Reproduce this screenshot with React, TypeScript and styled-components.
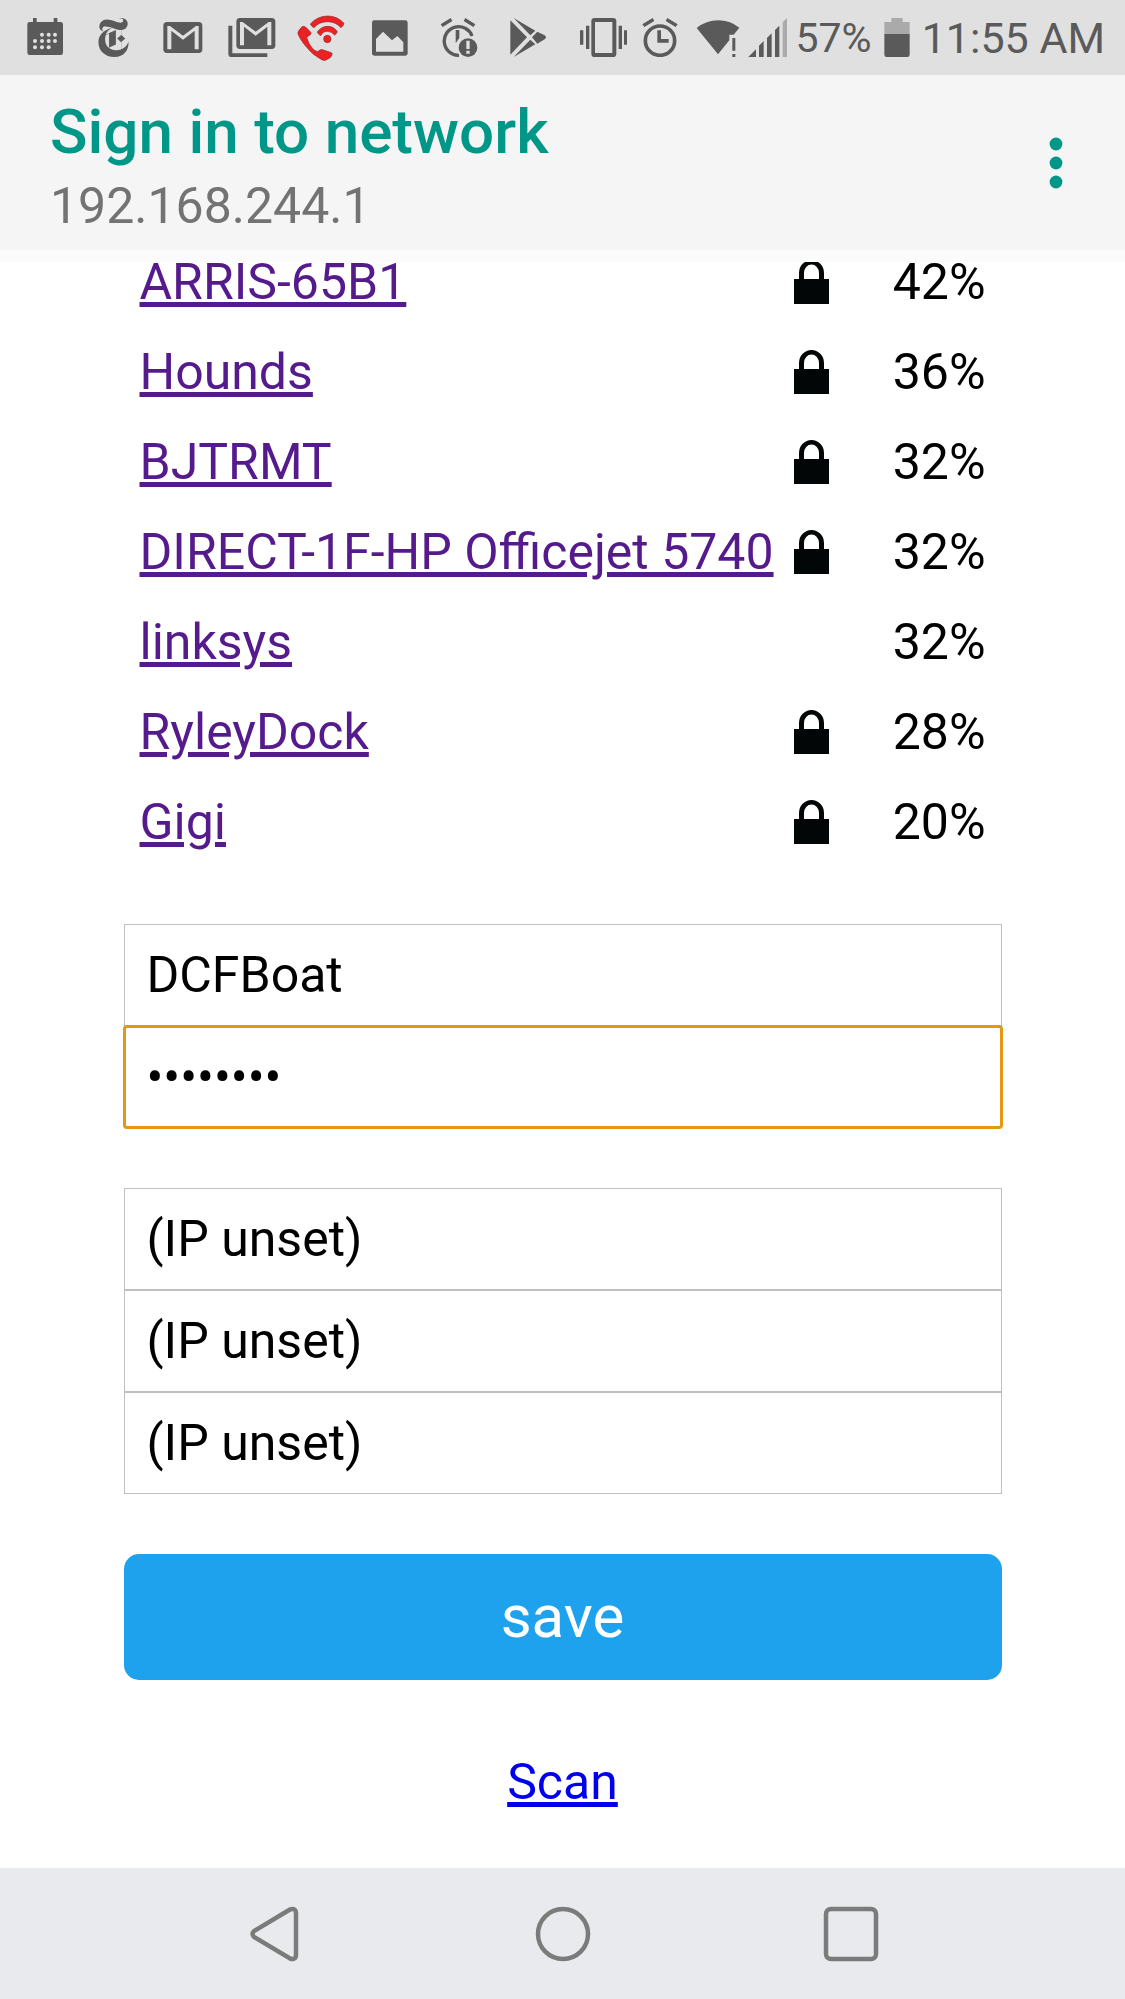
import React from "react";
import styled, { createGlobalStyle } from "styled-components";
import { SiNewyorktimes } from "react-icons/si";

const GlobalStyle = createGlobalStyle`
  *, *::before, *::after { box-sizing: border-box; }
  body {
    margin: 0;
    background: #fff;
    color: #000;
    font-family: Roboto, "Liberation Sans", sans-serif;
  }
`;

const Screen = styled.div`
  display: flex;
  flex-direction: column;
  min-height: 100vh;
`;

const StatusBar = styled.div`
  display: flex;
  justify-content: space-between;
  align-items: center;
  height: 75px;
  padding: 0 20px 0 10px;
  background: #e0e0e0;
  color: #5a5a5a;
`;

const Notifications = styled.div`
  display: flex;
  align-items: center;
`;

const Slot = styled.span`
  display: flex;
  justify-content: center;
  align-items: center;
  width: 69px;
`;

const SystemInfo = styled.div`
  display: flex;
  align-items: center;
  gap: 12px;
`;

const AlertModes = styled.div`
  display: flex;
  align-items: center;
  gap: 15px;
  padding-right: 6px;
`;

const Connectivity = styled.div`
  display: flex;
  align-items: center;
  gap: 8px;
`;

const Glyph = styled.svg`
  display: block;
  flex: none;
  fill: currentColor;
`;

const StatusText = styled.span<{ $size: number }>`
  font-size: ${(p) => p.$size}px;
  line-height: 48px;
  white-space: nowrap;
`;

const Header = styled.header`
  position: sticky;
  top: 0;
  z-index: 1;
  display: flex;
  justify-content: space-between;
  align-items: center;
  height: 187px;
  padding: 0 39px 0 50px;
  background: #f5f5f5;
  border-bottom: 12px solid #fbfbfb;
`;

const Heading = styled.div`
  padding-top: 10px;
`;

const Title = styled.h1`
  margin: 0;
  color: #009788;
  font-size: 62px;
  font-weight: 500;
  line-height: 76px;
`;

const Address = styled.div`
  color: #737373;
  font-size: 50px;
  line-height: 72px;
`;

const MenuButton = styled.button`
  display: grid;
  place-items: center;
  width: 60px;
  height: 72px;
  padding: 0;
  border: 0;
  background: none;
  color: #009788;
`;

const Page = styled.main`
  flex: 1;
`;

const Column = styled.div`
  display: flex;
  flex-direction: column;
  gap: 57px;
  width: 100%;
  max-width: 878px;
  margin: -25px auto 0;
`;

const NetworkTable = styled.table`
  margin: 0 16px;
  border-collapse: collapse;
  font-size: 50px;
  line-height: 60px;
`;

const NameCell = styled.td`
  height: 90px;
  padding: 0;
  white-space: nowrap;
`;

const LockCell = styled.td`
  width: 99px;
  padding: 0;
`;

const SignalCell = styled.td`
  width: 93px;
  padding: 0;
  text-align: right;
`;

const TextLink = styled.a<{ $visited?: boolean }>`
  color: ${(p) => (p.$visited ? "#551a8b" : "#0000ee")};
  text-decoration: underline;
`;

const Form = styled.form`
  display: flex;
  flex-direction: column;
  gap: 60px;
`;

const FieldGroup = styled.div`
  display: flex;
  flex-direction: column;
`;

const Field = styled.input<{ $active?: boolean }>`
  width: 100%;
  height: 102px;
  padding: 0 22px;
  border: 1px solid #c0c0c0;
  border-radius: ${(p) => (p.$active ? "3px" : "0")};
  outline: ${(p) => (p.$active ? "3px solid #e59712" : "none")};
  outline-offset: -2px;
  background: #fff;
  color: #000;
  font-family: inherit;
  font-size: 50px;
`;

const SaveButton = styled.button`
  height: 126px;
  padding: 0;
  border: 0;
  border-radius: 15px;
  background: #1fa2ee;
  color: #fff;
  font-family: inherit;
  font-size: 60px;
  line-height: 72px;
`;

const ScanRow = styled.div`
  padding: 15px 0 54px;
  font-size: 50px;
  line-height: 60px;
  text-align: center;
`;

const NavBar = styled.nav`
  display: flex;
  justify-content: center;
  align-items: center;
  gap: 168px;
  height: 131px;
  background: #e9eaee;
  color: #7a7c7b;
`;

const NavButton = styled.button`
  display: grid;
  place-items: center;
  width: 120px;
  height: 100px;
  padding: 0;
  border: 0;
  background: none;
  color: inherit;
`;

const CalendarIcon = () => (
  <Glyph width="36" height="39" viewBox="81 54 108 117">
    <path d="M99 54h11v12h51V54h11v12h10q7 0 7 7v85q0 7-7 7H89q-7 0-7-7V73q0-7 7-7h10z" />
    <g fill="#e0e0e0">
      {[
        [126, 104], [146, 104], [165, 104],
        [105, 123], [126, 123], [146, 123], [165, 123],
        [105, 142], [126, 142], [146, 142],
      ].map(([x, y]) => (
        <circle key={`${x}-${y}`} cx={x} cy={y} r="6" />
      ))}
    </g>
  </Glyph>
);

const MailIcon = () => (
  <Glyph width="40" height="31" viewBox="488 66 120 93">
    <rect x="489" y="66" width="117" height="93" rx="11" />
    <path d="M501 148V78h8l39 29 39-29h8v70h-12V92l-35 27-35-27v56z" fill="#e0e0e0" />
  </Glyph>
);

const MailStackIcon = () => (
  <Glyph width="48" height="39" viewBox="683 54 144 117">
    <path d="M684 77h12v83h105v11H694q-10 0-10-10z" />
    <rect x="708" y="54" width="117" height="93" rx="11" />
    <path d="M719 136V66h8l39 29 39-29h8v70h-12V80l-35 27-35-27v56z" fill="#e0e0e0" />
  </Glyph>
);

const WifiCallIcon = () => (
  <Glyph width="48" height="46" viewBox="888 43 144 138">
    <g fill="#ee2024" stroke="#8a2a2a" strokeWidth="2" strokeLinejoin="round">
      <path d="M907 77q6 1 11 6l11 12q3 4-1 7l-11 8q5 20 17 33 7 8 15 10l8-5q5-3 10 0l24 8q4 2 2 6-2 7-8 11l-12 6q-5 1-11-2-28-14-50-43-17-22-21-35-1-5 3-10l8-10q2-2 5-2z" />
      <path d="M928 70q22-24 52-24 29 0 49 22 0 5-9 13-16-18-40-18-27 0-41 18-9-5-11-11z" />
      <path d="M949 94q12-17 31-17 18 0 29 16-3 8-9 10-8-11-21-11t-20 13q-8-4-10-11z" />
      <circle cx="979" cy="115" r="11" />
    </g>
  </Glyph>
);

const PictureIcon = () => (
  <Glyph width="36" height="36" viewBox="33 58 108 108">
    <rect x="33" y="59" width="107" height="106" rx="7" />
    <path d="M45 153v-38l21-22 27 26 16-13 18 19v28z" fill="#e0e0e0" />
  </Glyph>
);

const MissedAlarmIcon = () => (
  <Glyph width="38" height="39" viewBox="239 54 114 117">
    <path d="M241 73l30-19 5 9-29 18zM315 54l30 19-6 8-29-18z" />
    <path d="M335 108A43 43 0 1 0 296 166" fill="none" stroke="currentColor" strokeWidth="10" />
    <path d="M286 90h11v24l-11 16z" />
    <circle cx="323" cy="143" r="28" />
    <path d="M318 122h10v25h-10zM318 152h10v9h-10z" fill="#e0e0e0" />
  </Glyph>
);

const StoreIcon = () => (
  <Glyph width="38" height="39" viewBox="443 54 114 117">
    <path d="M447 61l50 51-50 52zM457 54l65 38-15 14zM457 171l65-38-15-14zM528 95l22 11q8 6 0 12l-22 13-16-19z" />
  </Glyph>
);

const VibrateIcon = () => (
  <Glyph width="47" height="39" viewBox="657 54 141 117">
    <path
      fillRule="evenodd"
      d="M701 54h55q10 0 10 10v97q0 10-10 10h-55q-10 0-10-10V64q0-10 10-10zm1 12v93h52V66zM657 91h10v43h-10zM675 77h10v70h-10zM773 77h10v70h-10zM789 91h10v43h-10z"
    />
  </Glyph>
);

const AlarmIcon = () => (
  <Glyph width="36" height="39" viewBox="843 54 108 117">
    <path d="M844 73l31-19 5 9-30 18zM919 54l31 19-6 8-30-18z" />
    <circle cx="897" cy="122" r="44" fill="none" stroke="currentColor" strokeWidth="11" />
    <path d="M889 91h11v26h23v11h-34z" />
  </Glyph>
);

const WifiIcon = () => (
  <Glyph width="44" height="39" viewBox="1004 54 132 117">
    <path d="M1006 84q29-23 64-23 36 0 64 22l-17 21h-13v17l-34 42zM1113 114h9v38h-9zM1113 162h9v9h-9z" />
  </Glyph>
);

const SignalIcon = () => (
  <Glyph width="40" height="39" viewBox="81 54 120 117">
    <path d="M82 171l23-23v23zM114 137l14-14v48h-14zM138 114l14-14v71h-14zM162 90l13-13v94h-13z" />
    <path d="M185 67l13-13v117h-13z" opacity="0.4" />
  </Glyph>
);

const BatteryIcon = () => (
  <Glyph width="26" height="39" viewBox="492 54 78 117">
    <path d="M514 54h34v12h21v36h-76V66h21z" opacity="0.4" />
    <path d="M493 102h76v62q0 7-7 7h-62q-7 0-7-7z" />
  </Glyph>
);

const MoreIcon = () => (
  <Glyph width="14" height="52" viewBox="0 0 14 52">
    <circle cx="7" cy="7" r="6.4" />
    <circle cx="7" cy="26" r="6.4" />
    <circle cx="7" cy="45" r="6.4" />
  </Glyph>
);

const LockIcon = () => (
  <Glyph role="img" aria-label="Secured" width="36" height="46" viewBox="0 0 36 46">
    <path d="M0 20h5v-6a12.500 13 0 0 1 25 0v6h5v25H0zm10 0h15v-6a7.500 8.500 0 0 0-15 0z" fill="#030606" />
  </Glyph>
);

const notifications = [
  CalendarIcon,
  () => <SiNewyorktimes size={39} />,
  MailIcon,
  MailStackIcon,
  WifiCallIcon,
  PictureIcon,
  MissedAlarmIcon,
  StoreIcon,
];

const networks = [
  { name: "ARRIS-65B1", locked: true, signal: 42 },
  { name: "Hounds", locked: true, signal: 36 },
  { name: "BJTRMT", locked: true, signal: 32 },
  { name: "DIRECT-1F-HP Officejet 5740", locked: true, signal: 32 },
  { name: "linksys", locked: false, signal: 32 },
  { name: "RyleyDock", locked: true, signal: 28 },
  { name: "Gigi", locked: true, signal: 20 },
];

const addressFields = ["Static IP", "Gateway", "Subnet"];

export default function App() {
  return (
    <Screen>
      <GlobalStyle />
      <StatusBar>
        <Notifications>
          {notifications.map((Icon, i) => (
            <Slot key={i}>
              <Icon />
            </Slot>
          ))}
        </Notifications>
        <SystemInfo>
          <AlertModes>
            <VibrateIcon />
            <AlarmIcon />
          </AlertModes>
          <Connectivity>
            <WifiIcon />
            <SignalIcon />
            <StatusText $size={41}>57%</StatusText>
          </Connectivity>
          <BatteryIcon />
          <StatusText $size={43}>11:55 AM</StatusText>
        </SystemInfo>
      </StatusBar>
      <Header>
        <Heading>
          <Title>Sign in to network</Title>
          <Address>192.168.244.1</Address>
        </Heading>
        <MenuButton type="button" aria-label="More options">
          <MoreIcon />
        </MenuButton>
      </Header>
      <Page>
        <Column>
          <NetworkTable>
            <tbody>
              {networks.map((n) => (
                <tr key={n.name}>
                  <NameCell>
                    <TextLink href="#network" $visited>
                      {n.name}
                    </TextLink>
                  </NameCell>
                  <LockCell>{n.locked && <LockIcon />}</LockCell>
                  <SignalCell>{n.signal}%</SignalCell>
                </tr>
              ))}
            </tbody>
          </NetworkTable>
          <Form id="network" onSubmit={(e) => e.preventDefault()}>
            <FieldGroup>
              <Field aria-label="SSID" defaultValue="DCFBoat" />
              <Field aria-label="Password" type="password" defaultValue="password" $active />
            </FieldGroup>
            <FieldGroup>
              {addressFields.map((label) => (
                <Field key={label} aria-label={label} defaultValue="(IP unset)" />
              ))}
            </FieldGroup>
            <SaveButton type="submit">save</SaveButton>
          </Form>
          <ScanRow>
            <TextLink href="#scan">Scan</TextLink>
          </ScanRow>
        </Column>
      </Page>
      <NavBar>
        <NavButton type="button" aria-label="Back">
          <Glyph width="50" height="56" viewBox="0 0 50 56">
            <path
              d="M40 3.500L4 25q-3 3 0 6l36 21.500q6 2 6-4V7.500q0-6-6-4z"
              fill="none"
              stroke="currentColor"
              strokeWidth="4.500"
            />
          </Glyph>
        </NavButton>
        <NavButton type="button" aria-label="Home">
          <Glyph width="56" height="56" viewBox="0 0 56 56">
            <circle cx="28" cy="28" r="25" fill="none" stroke="currentColor" strokeWidth="4.500" />
          </Glyph>
        </NavButton>
        <NavButton type="button" aria-label="Recent apps">
          <Glyph width="56" height="56" viewBox="0 0 56 56">
            <rect x="3" y="3" width="50" height="50" rx="5" fill="none" stroke="currentColor" strokeWidth="4.500" />
          </Glyph>
        </NavButton>
      </NavBar>
    </Screen>
  );
}
